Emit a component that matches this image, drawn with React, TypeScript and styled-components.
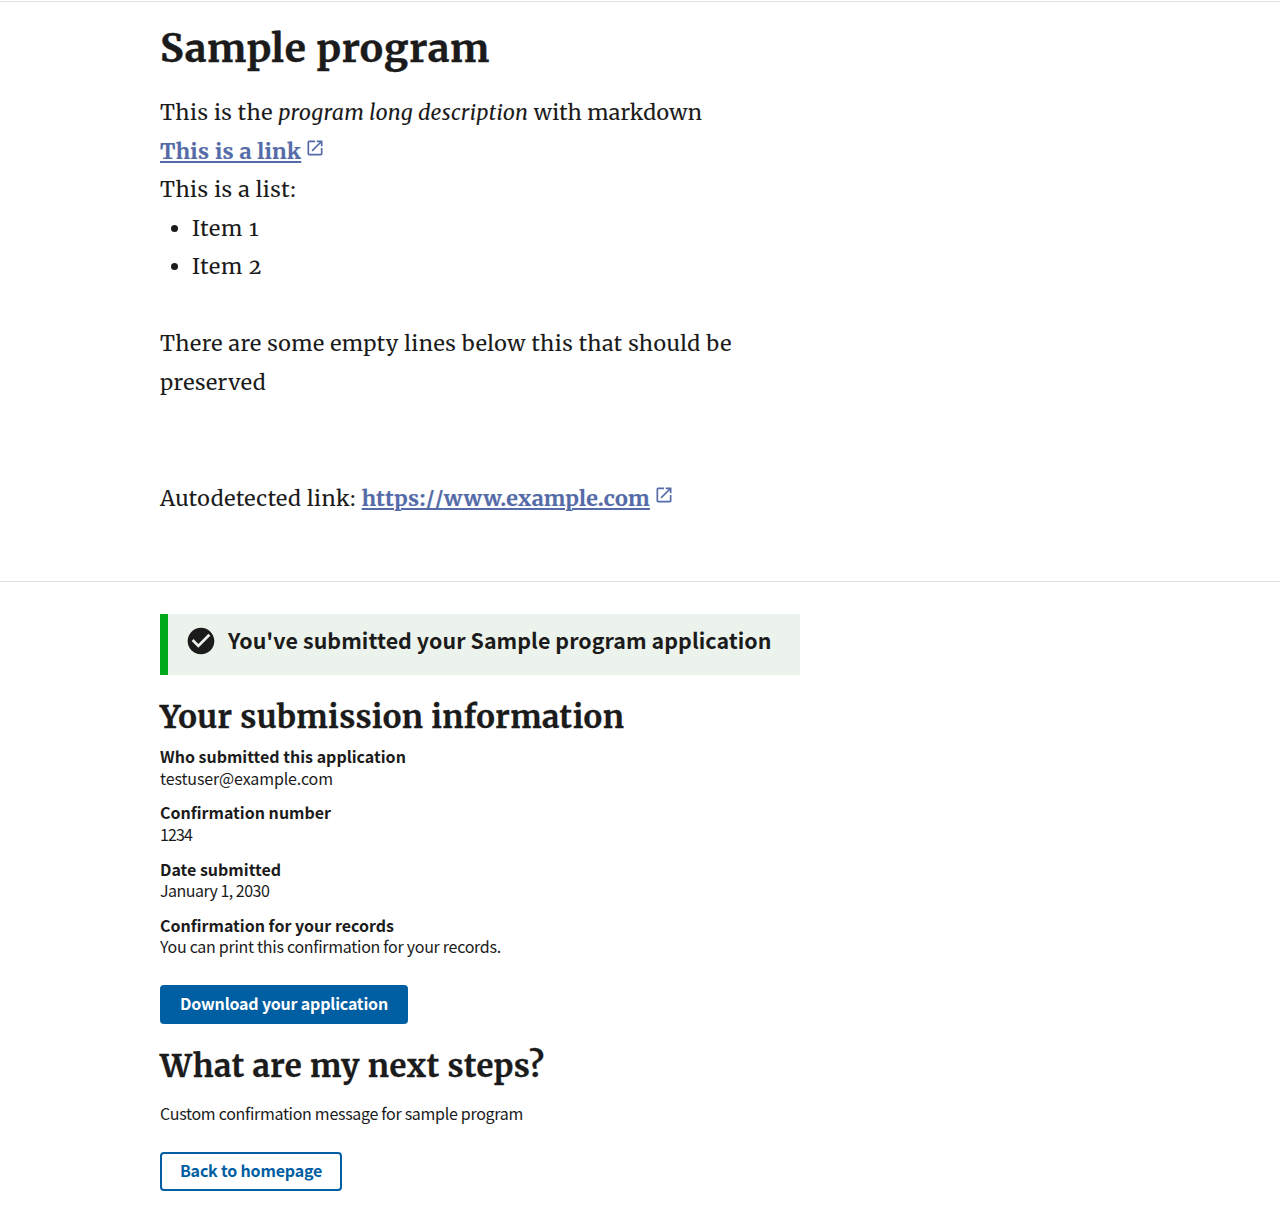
import React from "react";
import styled, { createGlobalStyle } from "styled-components";

const serif = `Merriweather, "DejaVu Serif Condensed", "DejaVu Serif", serif`;
const sans = `"Noto Sans CJK SC", "Noto Sans", sans-serif`;

const GlobalStyle = createGlobalStyle`
  * { box-sizing: border-box; }
  body { margin: 0; background: #fff; color: #1b1b1b; font-family: ${sans}; }
  h1, h2, p, ul, dl, dd { margin: 0; padding: 0; }
`;

const Hero = styled.header`
  margin-top: 1px;
  height: 581px;
  border-top: 1px solid #dfe1e2;
  border-bottom: 1px solid #dfe1e2;
  padding: 21px 160px 0;
`;
const Title = styled.h1`
  font: 700 39.04px/52px ${serif};
  letter-spacing: 0.66px;
  -webkit-text-stroke: 0.4px #1b1b1b;
`;
const Description = styled.div`
  margin-top: 19px;
  width: 640px;
  font: 400 21.44px/38.57px ${serif};
  font-variant-numeric: oldstyle-nums;
`;
const Line = styled.p<{ $spacing?: number }>`
  min-height: 38.57px;
  letter-spacing: ${(p) => p.$spacing ?? 0.46}px;
`;
const Emphasis = styled.em`
  letter-spacing: 0.25px;
`;
const Tail = styled.span`
  letter-spacing: 0.22px;
`;
const List = styled.ul`
  padding-left: 32px;
  letter-spacing: 0.85px;
`;
const Link = styled.a<{ $spacing: number }>`
  color: #546ba8;
  font-weight: 700;
  letter-spacing: ${(p) => p.$spacing}px;
  text-decoration: underline;
  text-decoration-thickness: 2px;
  text-underline-offset: 2px;
  -webkit-text-stroke: 0.2px #546ba8;
`;
const Scheme = styled.span`
  font-kerning: none;
`;
const LinkIcon = styled.svg`
  width: 20px;
  height: 20px;
  margin-left: 4px;
  vertical-align: 1px;
  fill: #546ba8;
`;

const Main = styled.main`
  padding: 32px 160px;
`;
const Alert = styled.div`
  display: flex;
  width: 640px;
  height: 61px;
  padding: 11px 0 0 17px;
  border-left: 8px solid #00a91c;
  background: #ecf3ec;
`;
const AlertIcon = styled.svg`
  width: 32px;
  height: 32px;
  margin-right: 11px;
  fill: #1b1b1b;
`;
const AlertText = styled.p`
  font-size: 21.4px;
  font-weight: 700;
  line-height: 30px;
  letter-spacing: 0.06px;
`;
const Heading = styled.h2<{ $top: number }>`
  margin-top: ${(p) => p.$top}px;
  font: 700 31.2px/42px ${serif};
  letter-spacing: 0.45px;
  -webkit-text-stroke: 0.3px #1b1b1b;
`;
const Details = styled.dl`
  display: flex;
  flex-direction: column;
  gap: 12.85px;
  margin-top: 8px;
  font-size: 16px;
  line-height: 21.7px;
`;
const Term = styled.dt`
  font-weight: 700;
`;
const Value = styled.dd<{ $spacing: number }>`
  letter-spacing: ${(p) => p.$spacing}px;
`;
const Message = styled.p`
  margin-top: 15px;
  font-size: 16px;
  line-height: 22px;
  letter-spacing: -0.3px;
`;
const Button = styled.button<{ $outline?: boolean; $top: number; $width: number }>`
  display: block;
  width: ${(p) => p.$width}px;
  height: 39px;
  margin-top: ${(p) => p.$top}px;
  padding: 0 0 2px;
  border: ${(p) => (p.$outline ? "2px solid #005ea2" : "0")};
  border-radius: 4px;
  background: ${(p) => (p.$outline ? "#fff" : "#005ea2")};
  color: ${(p) => (p.$outline ? "#005ea2" : "#fff")};
  font: 700 16px/17px ${sans};
  letter-spacing: -0.19px;
`;

const External = () => (
  <LinkIcon viewBox="0 0 24 24" aria-hidden="true">
    <path d="M19 19H5V5h7V3H5a2 2 0 0 0-2 2v14a2 2 0 0 0 2 2h14c1.1 0 2-.9 2-2v-7h-2v7zM14 3v2h3.59l-9.83 9.83 1.41 1.41L19 6.41V10h2V3h-7z" />
  </LinkIcon>
);

const details = [
  { term: "Who submitted this application", value: "testuser@example.com", spacing: -0.13 },
  { term: "Confirmation number", value: "1234", spacing: -0.9 },
  { term: "Date submitted", value: "January 1, 2030", spacing: -0.52 },
  {
    term: "Confirmation for your records",
    value: "You can print this confirmation for your records.",
    spacing: -0.28,
  },
];

export default function App() {
  return (
    <>
      <GlobalStyle />
      <Hero>
        <Title>Sample program</Title>
        <Description>
          <Line>
            This is the <Emphasis>program long description</Emphasis> <Tail>with markdown</Tail>
          </Line>
          <Line>
            <Link $spacing={0.35}>This is a link</Link>
            <External />
          </Line>
          <Line $spacing={0.5}>This is a list:</Line>
          <List>
            <li>Item 1</li>
            <li>Item 2</li>
          </List>
          <Line />
          <Line $spacing={0.47}>There are some empty lines below this that should be preserved</Line>
          <Line />
          <Line />
          <Line>
            Autodetected link:{" "}
            <Link $spacing={0.31}>
              <Scheme>https://</Scheme>www.example.com
            </Link>
            <External />
          </Line>
        </Description>
      </Hero>
      <Main>
        <Alert>
          <AlertIcon viewBox="0 0 24 24" aria-hidden="true">
            <path d="M12 2C6.48 2 2 6.48 2 12s4.48 10 10 10 10-4.48 10-10S17.52 2 12 2zm-2 15-5-5 1.41-1.41L10 14.17l7.59-7.59L19 8l-9 9z" />
          </AlertIcon>
          <AlertText>You've submitted your Sample program application</AlertText>
        </Alert>
        <Heading $top={21}>Your submission information</Heading>
        <Details>
          {details.map(({ term, value, spacing }) => (
            <div key={term}>
              <Term>{term}</Term>
              <Value $spacing={spacing}>{value}</Value>
            </div>
          ))}
        </Details>
        <Button $top={26.8} $width={248}>Download your application</Button>
        <Heading $top={21}>What are my next steps?</Heading>
        <Message>Custom confirmation message for sample program</Message>
        <Button $outline $top={28} $width={182}>Back to homepage</Button>
      </Main>
    </>
  );
}
